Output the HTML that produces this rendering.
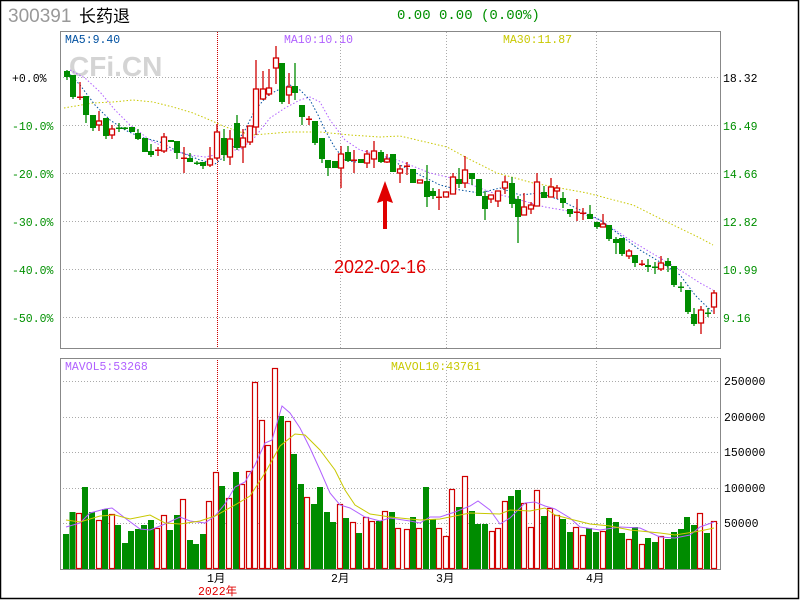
<!DOCTYPE html>
<html><head><meta charset="utf-8">
<style>
html,body{margin:0;padding:0;background:#fff;}
body{width:800px;height:600px;overflow:hidden;position:relative;}
svg{position:absolute;left:0;top:0;}
text{font-family:"Liberation Mono","WenQuanYi Zen Hei",monospace;}
text.sans{font-family:"Liberation Sans","WenQuanYi Zen Hei",sans-serif;}
</style></head>
<body>
<svg id="s" width="800" height="600" viewBox="0 0 800 600" xmlns="http://www.w3.org/2000/svg">
<rect x="0.5" y="0.5" width="798" height="598" fill="#fff" stroke="#000" stroke-width="1.5"/>
<g stroke="#aaa" stroke-width="1" stroke-dasharray="1,2">
<line x1="60" y1="77.5" x2="720" y2="77.5"/><line x1="60" y1="125.5" x2="720" y2="125.5"/>
<line x1="60" y1="173.5" x2="720" y2="173.5"/><line x1="60" y1="221.5" x2="720" y2="221.5"/>
<line x1="60" y1="269.5" x2="720" y2="269.5"/><line x1="60" y1="317.5" x2="720" y2="317.5"/>
<line x1="340.5" y1="32" x2="340.5" y2="348"/><line x1="446.5" y1="32" x2="446.5" y2="348"/><line x1="596.5" y1="32" x2="596.5" y2="348"/>
<line x1="60" y1="381.5" x2="720" y2="381.5"/><line x1="60" y1="417.5" x2="720" y2="417.5"/>
<line x1="60" y1="452.5" x2="720" y2="452.5"/><line x1="60" y1="488.5" x2="720" y2="488.5"/>
<line x1="60" y1="523.5" x2="720" y2="523.5"/>
<line x1="340.5" y1="358" x2="340.5" y2="569"/><line x1="446.5" y1="358" x2="446.5" y2="569"/><line x1="596.5" y1="358" x2="596.5" y2="569"/>
</g>
<g stroke="#c00" stroke-width="1" stroke-dasharray="1,1">
<line x1="217.5" y1="32" x2="217.5" y2="348"/><line x1="217.5" y1="358" x2="217.5" y2="472"/>
</g>
<rect x="60.5" y="31.5" width="660" height="317" fill="none" stroke="#888"/>
<rect x="60.5" y="358.5" width="660" height="211" fill="none" stroke="#888"/>
<text class="sans" x="69" y="76" font-weight="bold" font-size="28" fill="#d4d4d4">CFi.CN</text>
<g id="g"></g>
<text class="sans" x="8" y="22" font-size="19" fill="#999">300391</text>
<text class="sans" x="79" y="22" font-size="17" fill="#000">长药退</text>
<text x="397" y="19" font-size="14" fill="#009000">0.00 0.00 (0.00%)</text>
<g font-size="11.5">
<text x="65" y="43" fill="#0050a0">MA5:9.40</text>
<text x="284" y="43" fill="#b060ff">MA10:10.10</text>
<text x="503" y="43" fill="#c8c800">MA30:11.87</text>
<text x="65" y="370" fill="#b060ff">MAVOL5:53268</text>
<text x="391" y="370" fill="#c8c800">MAVOL10:43761</text>
<text x="12" y="82" fill="#000">+0.0%</text>
<text x="12" y="130" fill="#009000">-10.0%</text>
<text x="12" y="178" fill="#009000">-20.0%</text>
<text x="12" y="226" fill="#009000">-30.0%</text>
<text x="12" y="274" fill="#009000">-40.0%</text>
<text x="12" y="322" fill="#009000">-50.0%</text>
<text x="723" y="82" fill="#000">18.32</text>
<text x="723" y="130" fill="#009000">16.49</text>
<text x="723" y="178" fill="#009000">14.66</text>
<text x="723" y="226" fill="#009000">12.82</text>
<text x="723" y="274" fill="#009000">10.99</text>
<text x="723" y="322" fill="#009000">9.16</text>
<text x="724" y="385" fill="#000">250000</text>
<text x="724" y="421" fill="#000">200000</text>
<text x="724" y="456" fill="#000">150000</text>
<text x="724" y="492" fill="#000">100000</text>
<text x="724" y="527" fill="#000">50000</text>
<text x="207" y="582" fill="#000">1月</text>
<text x="198" y="595" fill="#e00000">2022年</text>
<text x="331" y="582" fill="#000">2月</text>
<text x="436" y="582" fill="#000">3月</text>
<text x="586" y="582" fill="#000">4月</text>
</g>
<text class="sans" x="334" y="273" font-size="18" fill="#e00000">2022-02-16</text>
<polygon points="385,181 377,203 383,201 383,229 387,229 387,201 393,203" fill="#e00000"/>
</svg>
<script>
var NS="http://www.w3.org/2000/svg",G=document.getElementById("g");
function el(t,a){var e=document.createElementNS(NS,t);for(var k in a)e.setAttribute(k,a[k]);G.appendChild(e);return e;}
var R="#d00000",GR="#008c00";
function pl(pts,col,dash){el("polyline",{points:pts.map(function(p){return p.join(",")}).join(" "),fill:"none",stroke:col,"stroke-width":1,"stroke-dasharray":dash||"none"});}
var V=[[66,534,'g'],[72.5,512,'g'],[79,513,'r'],[85,487,'g'],[92,512,'g'],[99,520,'r'],[105,509,'g'],[112,514,'r'],[118,525,'g'],[125,543,'g'],[131,531,'g'],[138,529,'g'],[144,525,'g'],[151,520,'g'],[157,528,'r'],[164,515,'r'],[170,530,'g'],[177,515,'g'],[183,499,'r'],[190,540,'g'],[196,544,'g'],[203,534,'g'],[209,501,'r'],[216,472,'r'],[222,486,'g'],[229,498,'r'],[236,472,'g'],[242,484,'r'],[249,471,'r'],[255,382,'r'],[262,420,'r'],[268,445,'r'],[275,368,'r'],[281,416,'g'],[288,421,'r'],[294,454,'g'],[301,484,'g'],[307,497,'r'],[314,504,'g'],[320,487,'g'],[327,512,'g'],[333,522,'g'],[340,504,'r'],[346,518,'g'],[353,522,'r'],[359,533,'g'],[366,517,'r'],[372,521,'r'],[379,521,'g'],[385,511,'r'],[392,512,'g'],[398,528,'r'],[407,529,'r'],[413,517,'g'],[419,528,'r'],[426,487,'g'],[433,519,'g'],[439,528,'r'],[446,536,'r'],[452,489,'r'],[459,507,'g'],[465,476,'r'],[472,511,'g'],[478,524,'g'],[485,524,'g'],[492,531,'r'],[498,528,'r'],[505,501,'r'],[511,496,'g'],[518,490,'g'],[524,503,'r'],[531,527,'r'],[537,490,'r'],[544,516,'g'],[550,508,'r'],[557,515,'r'],[563,519,'g'],[570,532,'g'],[576,527,'r'],[583,535,'r'],[589,528,'g'],[596,532,'g'],[603,531,'r'],[609,518,'g'],[616,522,'g'],[622,533,'g'],[629,539,'r'],[635,527,'g'],[642,544,'r'],[648,538,'g'],[655,542,'g'],[661,536,'r'],[668,539,'g'],[674,532,'g'],[681,529,'g'],[687,517,'g'],[694,525,'g'],[700,513,'r'],[707,533,'g'],[714,521,'r']];
V.forEach(function(v){var x=v[0],t=v[1];if(v[2]=='g')el("rect",{x:x-3,y:t,width:6,height:569-t,fill:GR});else el("rect",{x:x-2.5,y:t+0.5,width:5,height:568-t,fill:"#fff",stroke:R,"stroke-width":1.2});});
pl([[66,527],[80,523],[90,513],[105,509],[112,508],[125,518],[140,529],[150,530],[165,524],[180,517],[190,521],[205,523],[215,516],[225,504],[235,487],[245,482],[255,465],[265,443],[272,440],[282,406],[290,413],[300,428],[310,448],[320,470],[330,493],[340,505],[350,508],[365,517],[380,521],[390,518],[410,521],[420,523],[430,517],[440,517],[455,512],[470,506],[478,501],[490,510],[500,524],[510,518],[525,503],[535,502],[545,506],[555,509],[570,518],[580,527],[600,530],[620,527],[640,528],[660,537],[675,538],[690,535],[700,527],[714,522]],"#b060ff");
pl([[66,520],[80,522],[100,516],[115,515],[130,519],[150,515],[165,523],[180,524],[200,521],[215,516],[235,505],[250,496],[265,473],[280,446],[295,434],[305,435],[320,450],[335,470],[345,490],[355,505],[370,514],[390,517],[420,520],[440,519],[470,513],[500,514],[510,510],[530,511],[545,508],[555,515],[570,519],[590,524],[610,526],[630,530],[660,533],[675,535],[700,531],[714,528]],"#c8c800");
pl([[64,108],[93,103],[113,102],[133,100],[153,102],[173,107],[193,113],[210,120],[223,126],[240,132],[253,135],[277,133],[290,132],[320,132],[350,135],[380,137],[400,136],[447,147],[467,158],[497,173],[533,183],[587,193],[633,205],[667,222],[700,238],[713,245]],"#c8c800","1.5,2");
pl([[70,70],[85,78],[100,92],[115,110],[130,125],[150,140],[170,150],[190,155],[205,157],[215,155],[225,150],[240,150],[255,137],[270,118],[285,108],[300,100],[310,97],[320,102],[330,120],[345,140],[360,150],[380,155],[400,161],[430,173],[460,180],[490,192],[520,200],[545,207],[580,213],[600,220],[630,240],[660,258],[680,270],[700,283],[713,290]],"#b060ff","1.5,2");
pl([[68,72],[80,85],[95,105],[110,120],[125,130],[140,137],[160,142],[175,150],[200,160],[215,164],[225,156],[235,145],[245,130],[255,110],[268,95],[278,90],[290,85],[300,90],[310,100],[318,115],[325,130],[335,148],[345,160],[355,162],[370,158],[390,158],[400,165],[420,175],[440,185],[460,190],[480,193],[500,188],[520,195],[540,193],[560,200],[580,210],[600,220],[620,235],[640,250],[660,262],[680,275],[695,295],[705,305],[713,312]],"#0050a0","1.5,2");
var C=[[67,71,77,70,80,'g'],[73,75,97,75,99,'g'],[80,97,97,82,100,'r'],[86,96,115,96,123,'g'],[93,115,128,115,131,'g'],[99,121,125,111,131,'r'],[106,118,136,118,139,'g'],[112,129,135,125,139,'r'],[119,128,128,123,132,'g'],[125,128,129,127,130,'g'],[132,127,132,127,132,'g'],[138,133,139,129,140,'g'],[145,138,152,138,152,'g'],[151,151,155,144,157,'g'],[158,150,150,147,156,'r'],[164,137,151,133,153,'r'],[171,140,142,140,142,'g'],[177,141,153,141,159,'g'],[184,158,158,147,173,'r'],[190,158,162,153,162,'g'],[197,163,163,161,165,'g'],[203,162,166,162,169,'g'],[210,159,165,147,167,'r'],[217,132,158,124,160,'r'],[224,138,155,129,161,'g'],[230,139,157,130,165,'r'],[237,123,148,115,150,'g'],[243,138,147,129,163,'r'],[250,126,142,126,145,'r'],[256,89,127,60,135,'r'],[263,89,99,71,100,'r'],[269,88,94,69,96,'r'],[276,58,68,46,84,'r'],[282,63,102,63,104,'g'],[289,87,95,73,104,'r'],[295,86,93,63,100,'g'],[302,105,117,105,125,'g'],[309,119,119,116,125,'r'],[315,121,143,121,145,'g'],[322,138,159,138,163,'g'],[328,160,168,160,176,'g'],[335,161,168,161,168,'g'],[341,154,168,146,188,'r'],[348,152,161,146,162,'g'],[354,160,160,150,173,'r'],[361,159,163,159,163,'g'],[367,154,163,150,168,'r'],[374,151,159,141,168,'r'],[381,152,162,150,163,'g'],[387,159,162,154,163,'r'],[393,154,172,154,172,'g'],[400,169,173,165,183,'r'],[407,166,166,162,175,'r'],[413,169,183,169,183,'g'],[420,180,183,180,183,'r'],[427,181,197,165,207,'g'],[433,191,196,188,199,'g'],[439,197,197,189,210,'r'],[446,192,197,192,197,'r'],[453,177,194,173,194,'r'],[459,179,184,168,188,'g'],[465,170,183,156,188,'r'],[472,173,179,173,185,'g'],[479,179,196,179,196,'g'],[485,196,209,191,220,'g'],[491,195,199,195,203,'r'],[498,191,201,191,207,'r'],[505,182,188,176,194,'r'],[512,183,204,177,208,'g'],[518,199,217,196,243,'g'],[524,207,215,193,215,'r'],[531,205,209,202,214,'r'],[537,182,206,173,206,'r'],[544,192,198,186,198,'g'],[551,187,197,178,197,'r'],[557,188,191,185,199,'r'],[563,198,203,192,208,'g'],[570,209,214,209,217,'g'],[577,212,212,199,221,'r'],[583,213,213,208,220,'r'],[590,214,219,205,219,'g'],[597,222,227,222,229,'g'],[603,224,227,214,227,'r'],[609,225,239,225,241,'g'],[616,239,243,237,254,'g'],[622,238,254,238,256,'g'],[629,251,256,249,259,'r'],[635,255,263,255,267,'g'],[642,264,264,260,266,'r'],[648,265,267,259,272,'g'],[655,267,267,262,274,'g'],[661,263,269,256,271,'r'],[668,261,266,258,272,'g'],[674,266,285,266,287,'g'],[681,287,287,282,292,'g'],[688,290,312,290,314,'g'],[694,314,324,308,326,'g'],[701,310,323,306,334,'r'],[708,313,313,308,317,'g'],[714,293,307,290,314,'r']];
C.forEach(function(c){var x=c[0],t=c[1],b=c[2],col=c[5]=='r'?R:GR;
el("line",{x1:x,y1:c[3],x2:x,y2:c[4],stroke:col,"stroke-width":1.3});
if(b-t<2){el("rect",{x:x-3,y:t-0.5,width:6,height:1.5,fill:col});return;}
if(c[5]=='g')el("rect",{x:x-3,y:t,width:6,height:b-t,fill:col});
else el("rect",{x:x-2.5,y:t,width:5,height:b-t,fill:"#fff",stroke:col,"stroke-width":1.3});});
</script>
</body></html>
